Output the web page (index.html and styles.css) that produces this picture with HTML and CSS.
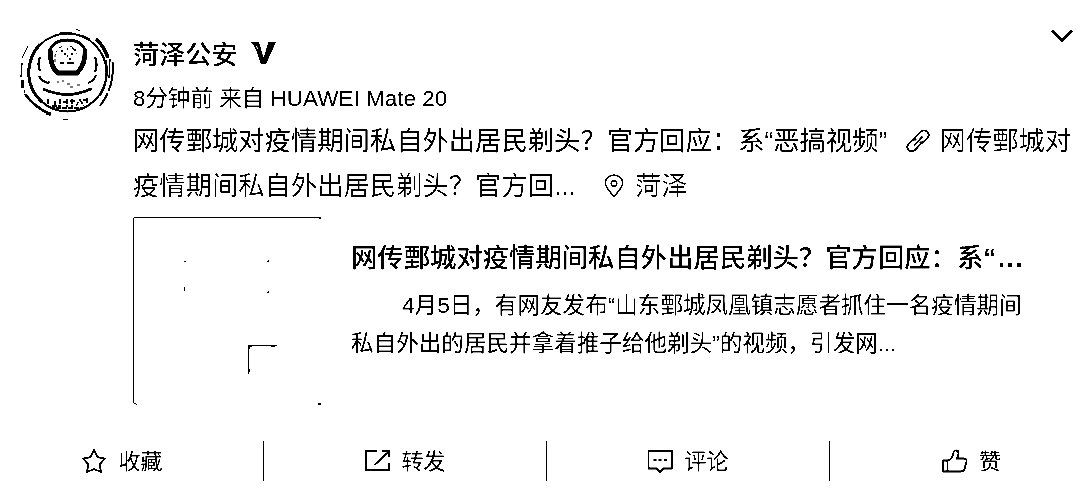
FILE: index.html
```html
<!DOCTYPE html>
<html lang="zh-CN">
<head>
<meta charset="utf-8">
<title>菏泽公安</title>
<link rel="stylesheet" href="styles.css">
</head>
<body>
<article class="post">
  <header class="head">
    <svg class="avatar" viewBox="0 0 120 110" fill="none" stroke="#000">
      <circle cx="57.500" cy="52.500" r="39" stroke-width="2"/>
      <path d="M30 24Q19 36 18.500 54Q20 72 32 82" stroke-width="3"/>
      <path d="M12.500 60v8" stroke-width="2.600"/>
      <path d="M11 57l1-14M12 38l6-12M14 70l1 3M66 9l4 2M71 15l9 4M50 13h12M53 99.500h5" stroke-width="1.300"/>
      <path d="M86 19Q94 26 98 38" stroke-width="3.600"/>
      <path d="M96 40Q100 60 90 76M100 39L99 58" stroke-width="1.300"/>
      <path d="M102.500 42Q105 66 90 86" stroke-width="2" stroke-dasharray="30 2"/>
      <path d="M15 74Q24 87 40 94" stroke-width="2.600"/><path d="M36 93.500h4v2" stroke-width="2.400"/>
      <path d="M40 29Q40 47 48 53H67Q76 44 75 29" stroke-width="4.800"/>
      <path d="M40 30Q44 20 57.500 20Q71 20 75 30" stroke-width="3"/>
      <path d="M47 53h21" stroke-width="3" stroke-dasharray="5 1"/>
      <path d="M45 42V35Q47 28 53 26M60 26Q66 28 67 34" stroke-width="1" stroke-dasharray="3 2"/>
      <path d="M51 31h2M57 29h1M62 27l3 4M54 34h2M61 34h2M50 43h4M57 43h7M59 39h2M57 36h1" stroke-width="1.300"/>
      <path d="M30 37Q27 44 30 51M85 37Q88 45 85 52M29 56Q32 62 39 63M86 55Q84 61 78 63" stroke-width="2.200"/>
      <path d="M38 62h2M47 62h2M57 64h3M60 67h3M67 65h3M52 61h2" stroke-width="1.200"/>
      <path d="M33 69Q58 80 82 68.500" stroke-width="2.600"/>
      <path d="M38 79v5M42 86h7M45 81v5M50 79v9M53 82h5M57 79v8M60 81h5M62 79v8M66 86l4-7M70 80l4 6M77 78v6M73 80h5M40 88h36" stroke-width="1.500" stroke-dasharray="5 1"/>
    </svg>
    <div class="who">
      <div class="name">菏泽公安
        <svg class="vip" width="26" height="24" viewBox="0 0 26 24"><path d="M0 1H9L13.500 17L18.500 1H26L16 23H11L6 9L3 3Z"/><path d="M6 4.500l2 4" stroke="#fff" stroke-width="1"/></svg>
      </div>
      <div class="meta">8分钟前 来自 HUAWEI Mate 20</div>
    </div>
    <svg class="more" width="26" height="18" viewBox="0 0 26 18"><path d="M3 3.500L13 13L23 3.500" fill="none" stroke="#000" stroke-width="3"/></svg>
  </header>
  <div class="content">
    <p class="text">网传鄄城对疫情期间私自外出居民剃头？官方回应：系“恶搞视频” <a class="link"><svg class="chain" width="26" height="26" viewBox="0 0 26 26" fill="none" stroke="#000" stroke-width="1.800" stroke-linejoin="round"><path d="M7.500 12L16 3.500Q19.500 1 22.500 4Q25 7 22.500 10L18 14.500H14.500M18.500 13L10 22Q6.500 25 3.500 22Q1 19 3.500 16L8 11.500H11.500M9 17.500L17.500 8.500"/></svg>网传鄄城对<br>疫情期间私自外出居民剃头？官方回...</a><a class="link place"><svg class="pin" width="20" height="24" viewBox="0 0 20 24" fill="none" stroke="#000" stroke-width="1.500"><path d="M10 22.500Q1.300 13 1.300 9A8.700 8 0 0 1 18.700 9Q18.700 13 10 22.500Z"/><circle cx="10" cy="9.500" r="2.800"/></svg>菏泽</a></p>
    <section class="card">
      <svg class="thumb" width="188" height="188" viewBox="0 0 188 188" shape-rendering="crispEdges">
        <path d="M1 0H188V2H186V1H1ZM0 1H1V186H0ZM1 186h2v1H1ZM3 187h1v1H3ZM185 186h3v2h-3ZM51 44h2v1h-2ZM51 70h1v4h-1ZM134 44h2v1h-2ZM135 43h1v1h-1ZM134 75h2v1h-2ZM135 74h1v1h-1ZM115 128h29v1h-29ZM115 128h1v29h-1ZM116 129h3v1h-2v2h-1ZM138 129h4v1h-4ZM116 152h1v3h-1Z"/>
      </svg>
      <div class="info">
        <h2 class="title">网传鄄城对疫情期间私自外出居民剃头？官方回应：系<span class="tail">“...</span></h2>
        <p class="desc">4月5日，有网友发布“山东鄄城凤凰镇志愿者抓住一名疫情期间<br>私自外出的居民并拿着推子给他剃头”的视频，引发网...</p>
      </div>
    </section>
  </div>
  <footer class="actions">
    <div class="action"><svg width="26" height="26" viewBox="0 0 26 26"><path d="M13 2L16.500 9.200L24 10.500L18.700 16.200L20 24L13 21L6 24L7.300 16.200L2 10.500L9.500 9.200Z"/></svg><span class="label">收藏</span></div>
    <div class="action"><svg width="26" height="26" viewBox="0 0 26 26"><path d="M13 3H2V22H25V14.500M10.500 17L25 3.500M18 3H25V9"/></svg><span class="label">转发</span></div>
    <div class="action"><svg width="26" height="26" viewBox="0 0 26 26"><path d="M1.500 3H25V20.500H16.500L13 24L9.500 20.500H1.500ZM6.500 12h3M11.500 12h3M17 12h3"/></svg><span class="label">评论</span></div>
    <div class="action"><svg width="26" height="26" viewBox="0 0 26 26"><path d="M1 12.500H5.500V23.500H1ZM5.500 12.500Q11 11 11.500 4.500Q12 2 14.500 2.500Q17 3 16.500 6L15 10.500H22Q25 10.500 24.500 13.500L22.500 21Q22 23.500 19 23.500H5.500"/></svg><span class="label">赞</span></div>
  </footer>
</article>
</body>
</html>
```
FILE: styles.css
```css
body {
  margin: 0;
  background: #fff;
  color: #000;
  overflow: hidden;
  font-family: "Liberation Sans", "Noto Sans CJK SC", sans-serif;
}
.post {
  width: 1080px;
  height: 493px;
  box-sizing: border-box;
  padding-top: 20px;
  overflow: hidden;
  background: #fff;
  filter: grayscale(1) contrast(12);
}
.head { display: flex; height: 99px; }
.avatar { flex: none; width: 120px; height: 110px; margin-left: 10px; }
.who { flex: 1; padding-left: 3px; }
.name {
  display: flex;
  align-items: center;
  gap: 12px;
  height: 38px;
  margin-top: 14px;
  font-size: 26.2px;
  font-weight: 500;
}
.meta { margin-top: 11px; font-size: 22.5px; line-height: 32px; }
.more { margin: 7px 5px 0 0; }
.content { padding-left: 133px; }
.text { margin: 0; font-size: 26.32px; line-height: 45px; white-space: nowrap; }
.link { color: #444; }
.chain { margin: 0 9px 0 10px; vertical-align: -4px; }
.pin { margin: 0 11px 0 28px; vertical-align: -3px; }
.card { display: flex; gap: 30px; margin-top: 8px; height: 188px; }
.thumb { flex: none; }
.info { padding-top: 22px; white-space: nowrap; }
.title { margin: 0; font-size: 26.35px; line-height: 38px; font-weight: 500; }
.tail { font-weight: 700; letter-spacing: 1.4px; }
.desc { margin: 10px 0 0; font-size: 22.58px; line-height: 38px; text-indent: 51px; }
.actions {
  display: grid;
  grid-template-columns: repeat(4, 283px);
  height: 40px;
  margin: 36px 0 0 -19px;
}
.action {
  display: flex;
  align-items: center;
  justify-content: center;
  gap: 11px;
  box-sizing: border-box;
  border-right: 1px solid #000;
  font-size: 22px;
}
.action:last-child { border-right: 0; }
.label { padding-bottom: 4px; }
.action svg { fill: none; stroke: #000; stroke-width: 1.800; }
```
